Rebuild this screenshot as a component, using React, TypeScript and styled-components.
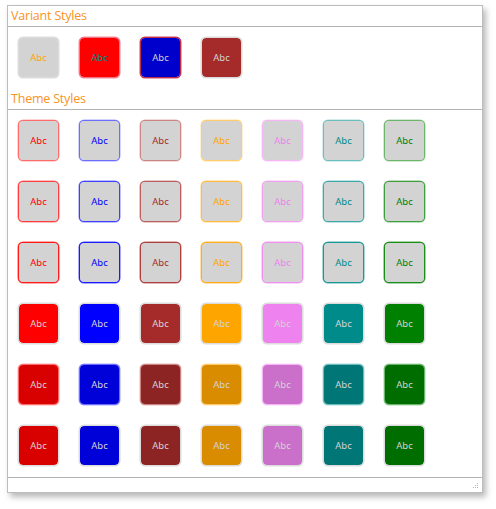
import type { FC } from 'react'
import { styled, createGlobalStyle } from 'styled-components'

const GlobalStyle = createGlobalStyle`
  html, body {
    margin: 0;
    padding: 0;
    background: #ffffff;
  }
`

const Page = styled.div`
  padding: 5px 0 0 7px;
  width: 496px;
  height: 509px;
  box-sizing: border-box;
`

const Window = styled.div`
  width: 476px;
  height: 488px;
  box-sizing: border-box;
  border: 1px solid #bdbdbd;
  background: #ffffff;
  box-shadow: 3px 4px 6px rgba(0, 0, 0, 0.28);
  display: flex;
  flex-direction: column;
`

const SectionTitle = styled.div`
  height: 20px;
  padding: 0 0 0 3px;
  border-bottom: 1px solid #b4b4b4;
  color: #f7931e;
  font-family: 'Open Sans', 'Noto Sans', sans-serif;
  font-size: 12.5px;
  line-height: 20px;
  letter-spacing: -0.2px;
`

const Grid = styled.div<{ $bottom: number }>`
  display: grid;
  grid-template-columns: repeat(7, 41px);
  column-gap: 20px;
  row-gap: 20px;
  padding: 10px 0 ${(p) => p.$bottom}px 10px;
`

const Tile = styled.div<{ $bg: string; $border: string; $fg: string }>`
  width: 41px;
  height: 41px;
  box-sizing: border-box;
  border-radius: 5px;
  border: 1px solid ${(p) => p.$border};
  box-shadow: 0 0 0 0.5px ${(p) => p.$border};
  background: ${(p) => p.$bg};
  background-clip: padding-box;
  color: ${(p) => p.$fg};
  display: flex;
  align-items: center;
  justify-content: center;
  font-family: 'Noto Sans', 'DejaVu Sans', sans-serif;
  font-size: 9.5px;
`

const Content = styled.div`
  flex: 1;
  border-bottom: 1px solid #b4b4b4;
`

const StatusBar = styled.div`
  height: 14px;
  display: flex;
  justify-content: flex-end;
  align-items: flex-end;
  padding: 0 3px 3px 0;
`

const Grip: FC = () => (
  <svg width="6" height="6" viewBox="0 0 6 6">
    <rect x="4" y="0" width="1" height="1" fill="#b8b8b8" />
    <rect x="2" y="2" width="1" height="1" fill="#b8b8b8" />
    <rect x="4" y="2" width="1" height="1" fill="#b8b8b8" />
    <rect x="0" y="4" width="1" height="1" fill="#b8b8b8" />
    <rect x="2" y="4" width="1" height="1" fill="#b8b8b8" />
    <rect x="4" y="4" width="1" height="1" fill="#b8b8b8" />
  </svg>
)

const variants = [
  { bg: '#d3d3d3', border: '#dcdcdc', fg: '#ffa500' },
  { bg: '#ff0000', border: 'rgba(240,110,130,0.8)', fg: '#008b8b' },
  { bg: '#0000cd', border: 'rgba(190,40,70,0.85)', fg: '#d3d3d3' },
  { bg: '#a52a2a', border: '#dcdcdc', fg: '#d3d3d3' },
]

// [base rgb, darker shade]
const themes: [string, string][] = [
  ['255,0,0', '#d90000'],
  ['0,0,255', '#0000d9'],
  ['165,42,42', '#8c2424'],
  ['255,165,0', '#d98c00'],
  ['238,130,238', '#ca6fca'],
  ['0,139,139', '#007676'],
  ['0,128,0', '#006d00'],
]

const rgb = (c: string, a = 1) => `rgba(${c},${a})`

const themeRows = [
  themes.map(([c]) => ({ bg: '#d3d3d3', border: rgb(c, 0.35), fg: rgb(c) })),
  themes.map(([c]) => ({ bg: '#d3d3d3', border: rgb(c, 0.5), fg: rgb(c) })),
  themes.map(([c]) => ({ bg: '#d3d3d3', border: rgb(c, 0.68), fg: rgb(c) })),
  themes.map(([c]) => ({ bg: rgb(c), border: '#dcdcdc', fg: '#d3d3d3' })),
  themes.map(([c, d]) => ({ bg: d, border: rgb(c, 0.35), fg: '#d3d3d3' })),
  themes.map(([c, d]) => ({ bg: d, border: '#dcdcdc', fg: '#d3d3d3' })),
]

const App: FC = () => (
  <>
    <GlobalStyle />
    <Page>
      <Window>
        <SectionTitle>Variant Styles</SectionTitle>
        <Grid $bottom={11}>
          {variants.map((v, i) => (
            <Tile key={i} $bg={v.bg} $border={v.border} $fg={v.fg}>
              Abc
            </Tile>
          ))}
        </Grid>
        <SectionTitle>Theme Styles</SectionTitle>
        <Content>
          <Grid $bottom={11}>
            {themeRows.flat().map((v, i) => (
              <Tile key={i} $bg={v.bg} $border={v.border} $fg={v.fg}>
                Abc
              </Tile>
            ))}
          </Grid>
        </Content>
        <StatusBar>
          <Grip />
        </StatusBar>
      </Window>
    </Page>
  </>
)

export default App
